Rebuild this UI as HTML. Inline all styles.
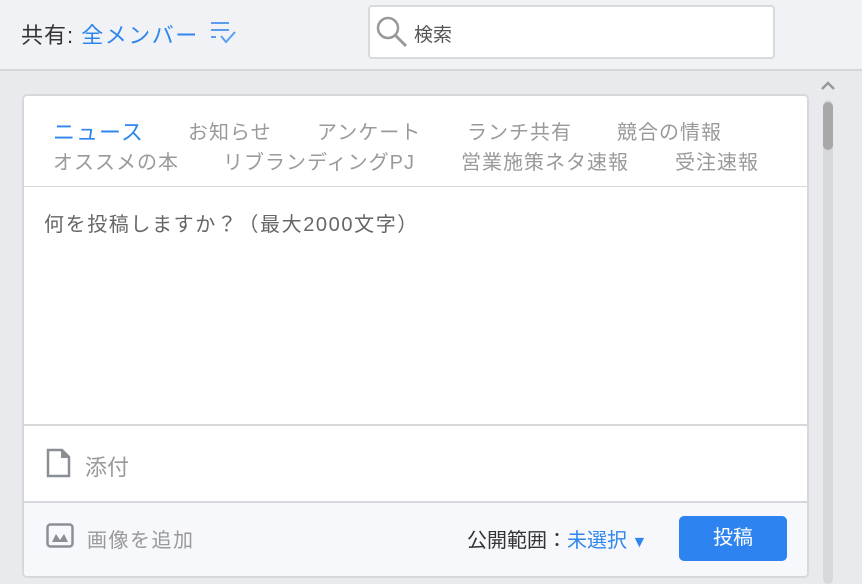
<!DOCTYPE html>
<html><head><meta charset="utf-8"><style>
*{margin:0;padding:0;box-sizing:border-box}
body{width:862px;height:584px;overflow:hidden;background:#e9eaee;font-family:"Liberation Sans","Noto Sans CJK JP",sans-serif;position:relative}
.hdr{position:absolute;left:0;top:0;width:862px;height:71px;background:#f0f2f6;border-bottom:2px solid #d5d7db}
.t{position:absolute;white-space:nowrap}
.search{position:absolute;left:368px;top:5px;width:407px;height:54px;background:#fff;border:2px solid #d8dadf;border-radius:4px}
.card{position:absolute;left:22px;top:94px;width:787px;height:484px;background:#fff;border:2px solid #d6d8dc;border-radius:5px;overflow:hidden}
.tab{position:absolute;font-size:20px;color:#9a9a9a;white-space:nowrap;letter-spacing:1px}
.foot{position:absolute;left:0;top:405px;width:100%;height:80px;background:#f7f8fb;border-top:2px solid #d6d8dc}
.btn{position:absolute;left:655px;top:13px;width:108px;height:45px;background:#2d83f0;border-radius:5px;color:#fff;font-size:20px;text-align:center;line-height:45px}
</style></head><body>
<div class="hdr"></div>
<div class="t" style="left:21px;top:18px;font-size:22px;color:#333;letter-spacing:1px">共有: <span style="color:#2f86ec;letter-spacing:1.5px">全メンバー</span></div>
<svg style="position:absolute;left:209px;top:21px" width="32" height="26" viewBox="0 0 32 26"><g stroke="#5b9ef0" stroke-width="2" fill="none"><path d="M2 2h18M2 9h18M2 16h5M12 15l5 6 9-10"/></g></svg>
<div class="search"></div>
<svg style="position:absolute;left:375px;top:15px" width="34" height="34" viewBox="0 0 34 34"><circle cx="13" cy="13" r="10" stroke="#999" stroke-width="2.5" fill="none"/><path d="M20 20l11 11" stroke="#999" stroke-width="3"/></svg>
<div class="t" style="left:414px;top:20px;font-size:19px;color:#555">検索</div>
<svg style="position:absolute;left:820px;top:80px" width="16" height="12"><path d="M2 9l6-6 6 6" stroke="#999" stroke-width="2.5" fill="none"/></svg>
<div style="position:absolute;left:823px;top:100px;width:10px;height:484px;background:#d8d9dc;border-radius:5px"></div>
<div style="position:absolute;left:823px;top:102px;width:10px;height:48px;background:#a8a8a8;border-radius:5px"></div>
<div class="card">
<div class="tab" style="left:29px;top:19px;color:#2f86ec;font-size:22px">ニュース</div>
<div class="tab" style="left:164px;top:20px">お知らせ</div>
<div class="tab" style="left:293px;top:20px">アンケート</div>
<div class="tab" style="left:443px;top:20px">ランチ共有</div>
<div class="tab" style="left:593px;top:20px">競合の情報</div>
<div class="tab" style="left:29px;top:50px">オススメの本</div>
<div class="tab" style="left:199px;top:50px">リブランディングPJ</div>
<div class="tab" style="left:437px;top:50px">営業施策ネタ速報</div>
<div class="tab" style="left:651px;top:50px">受注速報</div>
<div style="position:absolute;left:0;top:90px;width:100%;height:1px;background:#d6d8dc"></div>
<div class="t" style="left:20px;top:112px;font-size:20px;color:#666;letter-spacing:1.6px">何を投稿しますか？（最大2000文字）</div>
<div style="position:absolute;left:0;top:328px;width:100%;height:2px;background:#d6d8dc"></div>
<svg style="position:absolute;left:22px;top:352px" width="26" height="30" viewBox="0 0 26 30"><path d="M2 2h14l7 7v19H2z" fill="none" stroke="#8a8f96" stroke-width="2.5"/><path d="M15 2v8h8" fill="#8a8f96"/></svg>
<div class="t" style="left:61px;top:354px;font-size:22px;color:#999">添付</div>
<div class="foot">
<svg style="position:absolute;left:22px;top:20px" width="28" height="26" viewBox="0 0 28 26"><rect x="1.5" y="1.5" width="25" height="22" rx="3" fill="none" stroke="#8a8f96" stroke-width="2.5"/><path d="M6 19l4-8 4 6 4-6 4 8z" fill="#8a8f96"/></svg>
<div class="t" style="left:63px;top:21px;font-size:20px;color:#999;letter-spacing:1.5px">画像を追加</div>
<div class="t" style="left:443px;top:21px;font-size:20px;color:#333">公開範囲：<span style="color:#2f86ec">未選択</span><span style="color:#2f86ec;font-size:16px"> ▼</span></div>
<div class="btn">投稿</div>
</div>
</div>
</body></html>
